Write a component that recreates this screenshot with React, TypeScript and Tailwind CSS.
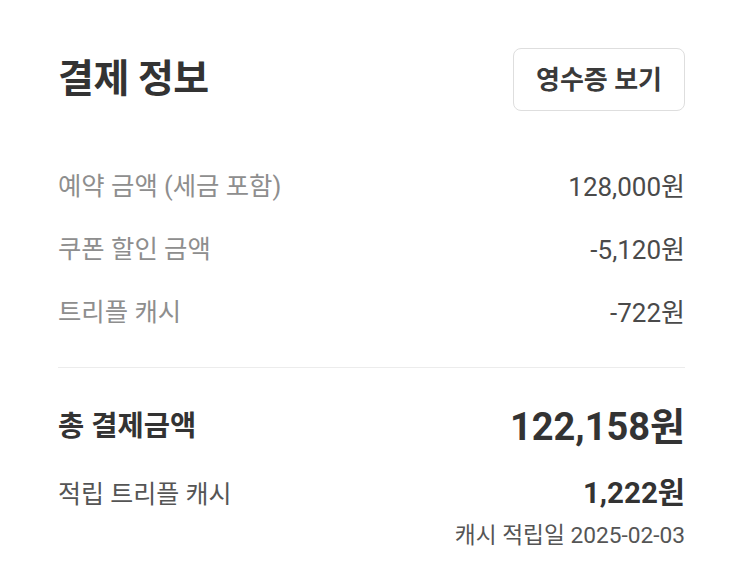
const rows = [
  { label: '예약 금액 (세금 포함)', value: '128,000원' },
  { label: '쿠폰 할인 금액', value: '-5,120원' },
  { label: '트리플 캐시', value: '-722원' },
]

export default function App() {
  return (
    <div className="w-[743px] h-[576px] bg-white px-[58px] font-['Roboto','Noto_Sans_CJK_KR',sans-serif] overflow-hidden">
      <div className="flex items-center justify-between pt-[48px]">
        <h1 className="text-[39px] font-bold leading-none text-[#333333] tracking-[-0.5px]">결제 정보</h1>
        <button className="h-[63px] w-[172px] rounded-[8px] border border-[#dedede] bg-white text-[26px] font-bold text-[#3a3a3a] leading-none">
          영수증 보기
        </button>
      </div>

      <div className="mt-[44px]">
        {rows.map((r) => (
          <div key={r.label} className="flex h-[63px] items-center justify-between">
            <span className="text-[25.4px] leading-none text-[#8e8e8e]">{r.label}</span>
            <span className="text-[26px] leading-none text-[#4a4a4a]">{r.value}</span>
          </div>
        ))}
      </div>

      <div className="mt-[23px] border-t border-[#ececec]" />

      <div className="mt-[34px] flex h-[50px] items-center justify-between">
        <span className="text-[28.5px] font-bold leading-none text-[#333333]">총 결제금액</span>
        <span className="text-[38px] font-bold leading-none text-[#333333]">122,158원</span>
      </div>

      <div className="mt-[22px] flex h-[40px] items-center justify-between">
        <span className="text-[25px] leading-none text-[#555555]">적립 트리플 캐시</span>
        <span className="text-[29.5px] font-bold leading-none text-[#333333]">1,222원</span>
      </div>

      <div className="mt-[9px] flex h-[26px] items-center justify-end">
        <span className="text-[22.7px] leading-none text-[#555555]">캐시 적립일 2025-02-03</span>
      </div>
    </div>
  )
}
